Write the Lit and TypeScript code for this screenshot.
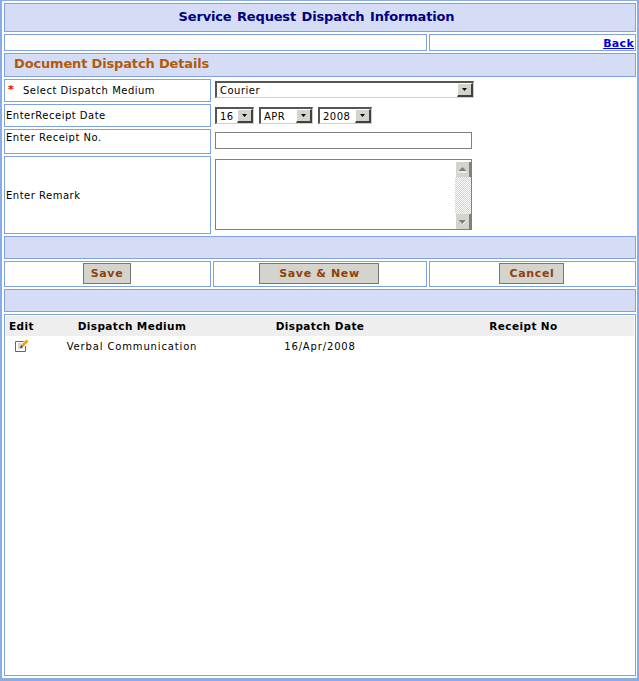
import { LitElement, html, css } from "lit";
import { customElement } from "lit/decorators.js";

const arrow = html`<span class="btn"><svg width="5" height="3" viewBox="0 0 5 3"><path d="M0 0h5L2.5 3z" fill="#000"/></svg></span>`;

@customElement("app-root")
export class AppRoot extends LitElement {
  static styles = css`
    :host {
      display: block;
      box-sizing: border-box;
      width: 639px;
      height: 681px;
      border-style: solid;
      border-color: #89ace4;
      border-width: 1px 2px 3px 2px;
      padding: 2px 1px 2px 2px;
      background: #fff;
      font-family: "DejaVu Sans", Verdana, sans-serif;
      font-size: 10px;
      color: #000;
      overflow: hidden;
    }
    .page {
      display: grid;
      grid-template-columns: 207px 214px 207px;
      grid-template-rows: 29px 17px 24px 23px 23px 25px 78px 23px 26px 23px 362px;
      gap: 2px;
      width: 632px;
    }
    .cell {
      box-sizing: border-box;
      border: 1px solid #7fa3e0;
      display: flex;
      align-items: center;
      min-width: 0;
    }
    .fill { background: #d5ddf6; }
    .full { grid-column: 1 / -1; }
    .title {
      justify-content: center;
      color: #000080;
      font: bold 13px "DejaVu Sans", sans-serif;
      letter-spacing: -0.17px;
      word-spacing: 1.2px;
      padding: 0 7px 2px 0;
    }
    .left { grid-column: 1 / 3; }
    .back {
      justify-content: flex-end;
      padding: 1px 1px 0 0;
    }
    .back a {
      color: #0000ee;
      font-weight: bold;
      font-size: 11px;
      text-decoration: underline;
      letter-spacing: 0.3px;
    }
    .section {
      color: #b25a0a;
      font-weight: bold;
      font-size: 13px;
      letter-spacing: -0.16px;
      padding-left: 9px;
      padding-bottom: 3px;
    }
    .label { padding-left: 1px; letter-spacing: 0.5px; }
    .label.top { align-items: flex-start; padding-top: 2px; }
    .req {
      color: #f00000;
      width: 17px;
      padding: 0 0 2px 2px;
      box-sizing: border-box;
      font-size: 11px;
      font-weight: bold;
      letter-spacing: 0;
    }
    .ctl {
      grid-column: 2 / -1;
      display: flex;
      align-items: flex-start;
      gap: 5px;
      padding: 2px 0 0 2px;
    }
    .ctl.date { padding-top: 3px; }
    .sel {
      box-sizing: border-box;
      height: 17px;
      display: flex;
      align-items: center;
      justify-content: space-between;
      background: #fff;
      border-style: solid;
      border-width: 2px 1px 1px 2px;
      border-color: #555 #d4d0c8 #d4d0c8 #555;
      padding-left: 3px;
      letter-spacing: 0.5px;
    }
    .btn {
      box-sizing: border-box;
      width: 16px;
      height: 14px;
      display: flex;
      align-items: center;
      justify-content: center;
      background: #d4d4cc;
      border-style: solid;
      border-width: 1px 2px 2px 1px;
      border-color: #fff #404040 #404040 #fff;
      flex: none;
    }
    .w-wide { width: 259px; }
    .w-day { width: 39px; }
    .w-mon { width: 54px; }
    .text {
      box-sizing: border-box;
      display: block;
      width: 257px;
      height: 17px;
      border: 1px solid #808080;
      outline: none;
      padding: 0;
      margin: 1px 0 0;
      background: #fff;
    }
    .area {
      box-sizing: border-box;
      width: 257px;
      height: 71px;
      margin-top: 1px;
      border: 1px solid #808080;
      display: flex;
      background: #fff;
    }
    .area textarea {
      flex: 1;
      min-width: 0;
      border: 0;
      outline: none;
      resize: none;
      padding: 0;
      background: #fff;
    }
    .bar {
      width: 16px;
      flex: none;
      display: flex;
      flex-direction: column;
    }
    .sb {
      box-sizing: border-box;
      height: 15px;
      margin-left: 1px;
      background: #d4d4cc;
      border-right: 2px solid #808080;
      display: flex;
      align-items: center;
      justify-content: center;
      flex: none;
    }
    .sb.up { margin-top: 2px; }
    .track {
      flex: 1;
      background: repeating-conic-gradient(#d4d0c8 0 25%, #fff 0 50%) 0 0 / 2px 2px;
    }
    .center { justify-content: center; padding-right: 2px; }
    .act {
      box-sizing: border-box;
      height: 21px;
      margin-top: -1px;
      padding: 0 0 0 1px;
      background: #d4d4cc;
      border: 1px solid #777;
      color: #8f3f0a;
      font: bold 11px "DejaVu Sans", sans-serif;
      letter-spacing: 0.65px;
    }
    .w-save { width: 48px; }
    .w-new { width: 120px; }
    .w-cancel { width: 65px; }
    .list { display: block; padding: 1px; }
    .row {
      display: grid;
      grid-template-columns: 31px 190px 186px 221px;
      align-items: center;
      text-align: center;
    }
    .head {
      height: 20px;
      background: #eeeeee;
      font-weight: bold;
      font-size: 10.5px;
      letter-spacing: 0.4px;
    }
    .data { height: 20px; letter-spacing: 0.85px; }
    .data svg { display: block; margin: 0 auto 1px; }
  `;

  render() {
    return html`
      <div class="page">
        <div class="cell fill full title">Service Request Dispatch Information</div>
        <div class="cell left"></div>
        <div class="cell back"><a href="#">Back</a></div>
        <div class="cell fill full section">Document Dispatch Details</div>

        <div class="cell label"><span class="req">*</span>Select Dispatch Medium</div>
        <div class="ctl"><div class="sel w-wide"><span>Courier</span>${arrow}</div></div>

        <div class="cell label">EnterReceipt Date</div>
        <div class="ctl date">
          <div class="sel w-day"><span>16</span>${arrow}</div>
          <div class="sel w-mon"><span>APR</span>${arrow}</div>
          <div class="sel w-mon"><span>2008</span>${arrow}</div>
        </div>

        <div class="cell label top">Enter Receipt No.</div>
        <div class="ctl"><input class="text" type="text" /></div>

        <div class="cell label">Enter Remark</div>
        <div class="ctl">
          <div class="area">
            <textarea></textarea>
            <div class="bar">
              <div class="sb up"><svg width="9" height="6" viewBox="0 0 9 6"><path d="M4.5 0L8.5 4H.5z" fill="#808080"/><path d="M0 5h9" stroke="#fff"/></svg></div>
              <div class="track"></div>
              <div class="sb"><svg width="9" height="6" viewBox="0 0 9 6"><path d="M.5 1h8L4.5 5z" fill="#808080"/><path d="M8.5 1L4.5 5.5" stroke="#fff"/></svg></div>
            </div>
          </div>
        </div>

        <div class="cell fill full"></div>

        <div class="cell center"><button class="act w-save">Save</button></div>
        <div class="cell center"><button class="act w-new">Save &amp; New</button></div>
        <div class="cell center"><button class="act w-cancel">Cancel</button></div>

        <div class="cell fill full"></div>

        <div class="cell full list">
          <div class="row head"><span>Edit</span><span>Dispatch Medium</span><span>Dispatch Date</span><span>Receipt No</span></div>
          <div class="row data">
            <span>
              <svg width="14" height="13" viewBox="0 0 14 13">
                <path d="M8.5 2.5H.5v10h10V7" fill="#fff" stroke="#666"/>
                <path d="M3 5h3M3 7h2M3 9h5" stroke="#aaa"/>
                <path d="M7 7L12.5 1.5" stroke="#f5a010" stroke-width="3"/>
                <path d="M5 9l1-3 2 2z" fill="#222"/>
              </svg>
            </span>
            <span>Verbal Communication</span>
            <span>16/Apr/2008</span>
            <span></span>
          </div>
        </div>
      </div>
    `;
  }
}
